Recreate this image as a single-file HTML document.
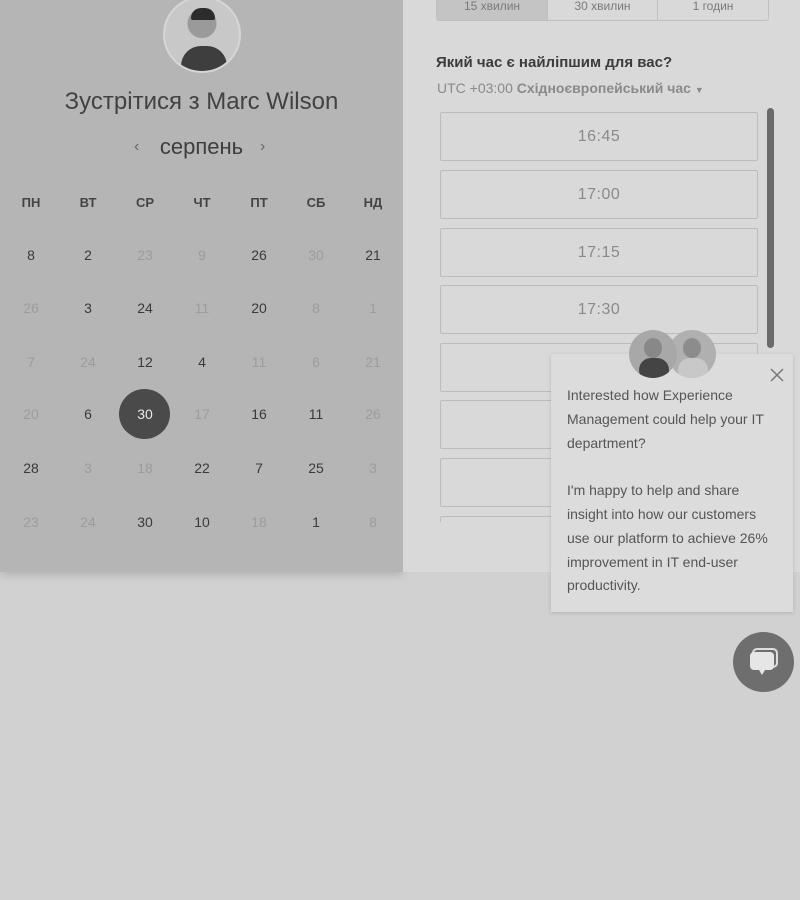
<!DOCTYPE html>
<html><head><meta charset="utf-8"><style>
*{margin:0;padding:0;box-sizing:border-box}
body{width:800px;height:900px;background:#d1d1d1;font-family:"Liberation Sans","DejaVu Sans",sans-serif;position:relative;overflow:hidden}
#left{position:absolute;left:0;top:0;width:403px;height:572px;background:#b5b5b5;box-shadow:0 3px 8px rgba(0,0,0,.15)}
#right{position:absolute;left:403px;top:0;width:397px;height:572px;background:#d9d9d9}
.abs{position:absolute}
.d{position:absolute;width:50px;margin-left:-25px;text-align:center;font-size:14px;color:#3a3a3a;line-height:16px}
.l{color:#9c9c9c}
.h{position:absolute;width:50px;margin-left:-25px;text-align:center;font-size:13px;font-weight:bold;color:#444}
.slot{position:absolute;left:440px;width:318px;height:49px;border:1px solid #bcbcbc;border-radius:2px;text-align:center;line-height:47px;font-size:16px;color:#8a8a8a;letter-spacing:.5px}
.tab{position:absolute;top:-2px;height:23px;border:1px solid #c0c0c0;font-size:12px;color:#7a7a7a;text-align:center;line-height:14px}
</style></head><body>
<div id="left">
 <div class="abs" style="left:163px;top:-4px;width:78px;height:77px;border-radius:50%;border:2px solid #d6d6d6;background:radial-gradient(circle at 50% 35%,#9a9a9a 0 14px,#c8c8c8 15px);overflow:hidden">
  <div class="abs" style="left:16px;top:48px;width:46px;height:30px;border-radius:20px 20px 0 0;background:#3e3e3e"></div>
  <div class="abs" style="left:26px;top:10px;width:24px;height:12px;border-radius:10px 10px 2px 2px;background:#2c2c2c"></div>
 </div>
 <div class="abs" style="left:0;width:403px;top:88px;text-align:center;font-size:24px;color:#424242">Зустрітися з Marc Wilson</div>
 <div class="abs" style="left:0;width:403px;top:134px;text-align:center;font-size:22px;color:#3e3e3e">серпень</div>
 <div class="abs" style="left:134px;top:138px;font-size:16px;color:#666">‹</div>
 <div class="abs" style="left:260px;top:138px;font-size:16px;color:#666">›</div>
 <div class="h" style="left:31px;top:195px">ПН</div><div class="h" style="left:88px;top:195px">ВТ</div><div class="h" style="left:145px;top:195px">СР</div><div class="h" style="left:202px;top:195px">ЧТ</div><div class="h" style="left:259px;top:195px">ПТ</div><div class="h" style="left:316px;top:195px">СБ</div><div class="h" style="left:373px;top:195px">НД</div>
 <div class="abs" style="left:119px;top:389px;width:51px;height:50px;border-radius:50%;background:#4a4a4a"></div>
 <div id="grid"></div>
</div>
<div id="right">
 <div class="tab" style="left:33px;width:112px;background:#c4c4c4;border-radius:0 0 0 3px">15 хвилин</div>
 <div class="tab" style="left:144px;width:111px">30 хвилин</div>
 <div class="tab" style="left:254px;width:112px;border-radius:0 0 3px 0">1 годин</div>
 <div class="abs" style="left:33px;top:54px;font-size:15px;font-weight:bold;color:#3c3c3c">Який час є найліпшим для вас?</div>
 <div class="abs" style="left:34px;top:80px;font-size:14px;color:#8a8a8a">UTC +03:00 <b>Східноєвропейський час</b> <span style="font-size:9px">▼</span></div>
 <div class="abs" style="left:37px;top:108px;width:333px;height:414px;overflow:hidden"></div>
 <div class="abs" style="left:364px;top:108px;width:7px;height:240px;border-radius:4px;background:#6a6a6a"></div>
</div>
<div style="position:absolute;left:0;top:0;width:800px;height:522px;overflow:hidden">
 <div class="slot" style="top:112px">16:45</div>
 <div class="slot" style="top:170px">17:00</div>
 <div class="slot" style="top:228px">17:15</div>
 <div class="slot" style="top:285px">17:30</div>
 <div class="slot" style="top:343px"></div>
 <div class="slot" style="top:400px"></div>
 <div class="slot" style="top:458px"></div>
 <div class="slot" style="top:516px"></div>
</div>
<div class="abs" style="left:551px;top:354px;width:242px;height:258px;background:#dcdcdc;box-shadow:0 1px 4px rgba(0,0,0,.15)">
 <div class="abs" style="left:16px;top:30px;width:215px;font-size:14px;line-height:23.8px;color:#555">Interested how Experience Management could help your IT department?<br><br>I'm happy to help and share insight into how our customers use our platform to achieve 26% improvement in IT end-user productivity.</div>
 <svg class="abs" style="left:218px;top:13px" width="16" height="16"><path d="M2 2L14 14M14 2L2 14" stroke="#777" stroke-width="1.5"/></svg>
</div>
<div class="abs" style="left:668px;top:330px;width:48px;height:48px;border-radius:50%;background:#b0b0b0;overflow:hidden"><div class="abs" style="left:10px;top:28px;width:30px;height:24px;border-radius:14px;background:#c8c8c8"></div><div class="abs" style="left:15px;top:8px;width:18px;height:20px;border-radius:50%;background:#8c8c8c"></div></div>
<div class="abs" style="left:629px;top:330px;width:48px;height:48px;border-radius:50%;background:#a8a8a8;overflow:hidden"><div class="abs" style="left:10px;top:28px;width:30px;height:24px;border-radius:14px;background:#444"></div><div class="abs" style="left:15px;top:8px;width:18px;height:20px;border-radius:50%;background:#888"></div></div>
<div class="abs" style="left:733px;top:632px;width:61px;height:60px;border-radius:50%;background:#6e6e6e">
 <svg class="abs" style="left:15px;top:16px" width="32" height="30"><rect x="5" y="1" width="24" height="18" rx="4" fill="none" stroke="#ddd" stroke-width="2"/><rect x="2" y="4" width="24" height="18" rx="4" fill="#e6e6e6"/><path d="M11 22L14 27L17 22Z" fill="#e6e6e6"/></svg>
</div>
<script>
var rows=[[["8"],["2"],["23",1],["9",1],["26"],["30",1],["21"]],[["26",1],["3"],["24"],["11",1],["20"],["8",1],["1",1]],[["7",1],["24",1],["12"],["4"],["11",1],["6",1],["21",1]],[["20",1],["6"],["30",2],["17",1],["16"],["11"],["26",1]],[["28"],["3",1],["18",1],["22"],["7"],["25"],["3",1]],[["23",1],["24",1],["30"],["10"],["18",1],["1"],["8",1]]];
var ys=[247,300,354,406,460,514],h="";
rows.forEach(function(r,i){r.forEach(function(c,j){var cls=c[1]==1?"d l":"d";var st=c[1]==2?"color:#e8e8e8;":"";h+='<div class="'+cls+'" style="'+st+'left:'+(31+57*j)+'px;top:'+ys[i]+'px">'+c[0]+'</div>';});});
document.getElementById("grid").innerHTML=h;
</script>
</body></html>
